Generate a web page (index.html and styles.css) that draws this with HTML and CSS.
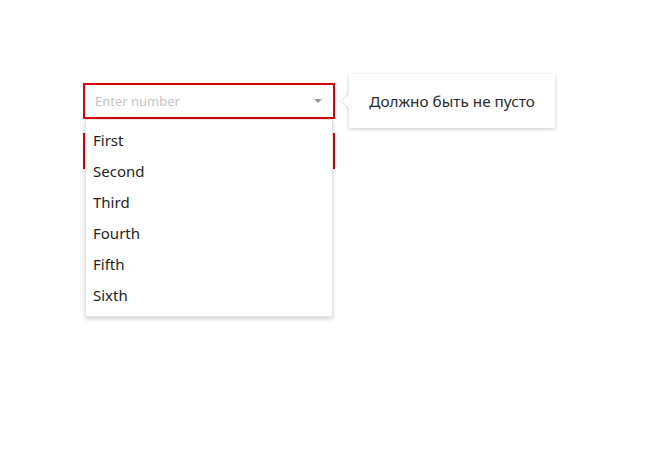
FILE: index.html
```html
<!DOCTYPE html>
<html>
<head>
<meta charset="utf-8">
<link rel="stylesheet" href="styles.css">
</head>
<body>
<div class="form">
  <div class="field">
    <div class="select invalid">
      <span class="placeholder">Enter number</span>
      <span class="caret"></span>
    </div>
    <ul class="menu">
      <li>First</li>
      <li>Second</li>
      <li>Third</li>
      <li>Fourth</li>
      <li>Fifth</li>
      <li>Sixth</li>
    </ul>
    <div class="tooltip">Должно быть не пусто</div>
  </div>
  <div class="field">
    <div class="select invalid"></div>
  </div>
</div>
</body>
</html>
```
FILE: styles.css
```css
html, body {
  margin: 0;
  padding: 0;
  background: #fff;
  font-family: "Segoe UI", "Noto Sans", "Open Sans", sans-serif;
}
body {
  min-height: 468px;
}
.form {
  display: flex;
  flex-direction: column;
  gap: 14px;
  width: 252px;
  padding: 83px 0 0 83px;
}
.field {
  position: relative;
}
.select {
  box-sizing: border-box;
  height: 36px;
  border: 2px solid #d6d6d6;
  display: flex;
  align-items: center;
  justify-content: space-between;
  padding: 0 11px 0 10px;
  background: #fff;
}
.select.invalid {
  border-color: #d9000d;
}
.placeholder {
  font-size: 13px;
  color: #c4c4c4;
}
.caret {
  width: 0;
  height: 0;
  border-left: 4px solid transparent;
  border-right: 4px solid transparent;
  border-top: 4px solid #9a9a9a;
}
.menu {
  position: absolute;
  z-index: 2;
  left: 2px;
  top: 36px;
  width: 248px;
  box-sizing: border-box;
  margin: 0;
  padding: 5px 0 5px;
  list-style: none;
  background: #fff;
  border: 1px solid #e2e2e2;
  box-shadow: 0 2px 4px rgba(0,0,0,0.18);
}
.menu li {
  height: 31px;
  line-height: 31px;
  padding: 0 7px;
  font-size: 15px;
  color: #1e1e1e;
}
.tooltip {
  position: absolute;
  z-index: 3;
  left: 266px;
  top: -9px;
  width: 206px;
  height: 54px;
  box-sizing: border-box;
  display: flex;
  align-items: center;
  justify-content: center;
  font-size: 15.3px;
  color: #2a2a2a;
  background: #fff;
  border-radius: 2px;
  box-shadow: 0 1px 4px rgba(0,0,0,0.22);
}
.tooltip::before {
  content: "";
  position: absolute;
  left: -5px;
  top: 22px;
  width: 10px;
  height: 10px;
  background: #fff;
  transform: rotate(45deg);
  box-shadow: -1px 1px 2px rgba(0,0,0,0.12);
}
.tooltip::after {
  content: "";
  position: absolute;
  left: 0;
  top: 18px;
  width: 10px;
  height: 18px;
  background: #fff;
}
```
